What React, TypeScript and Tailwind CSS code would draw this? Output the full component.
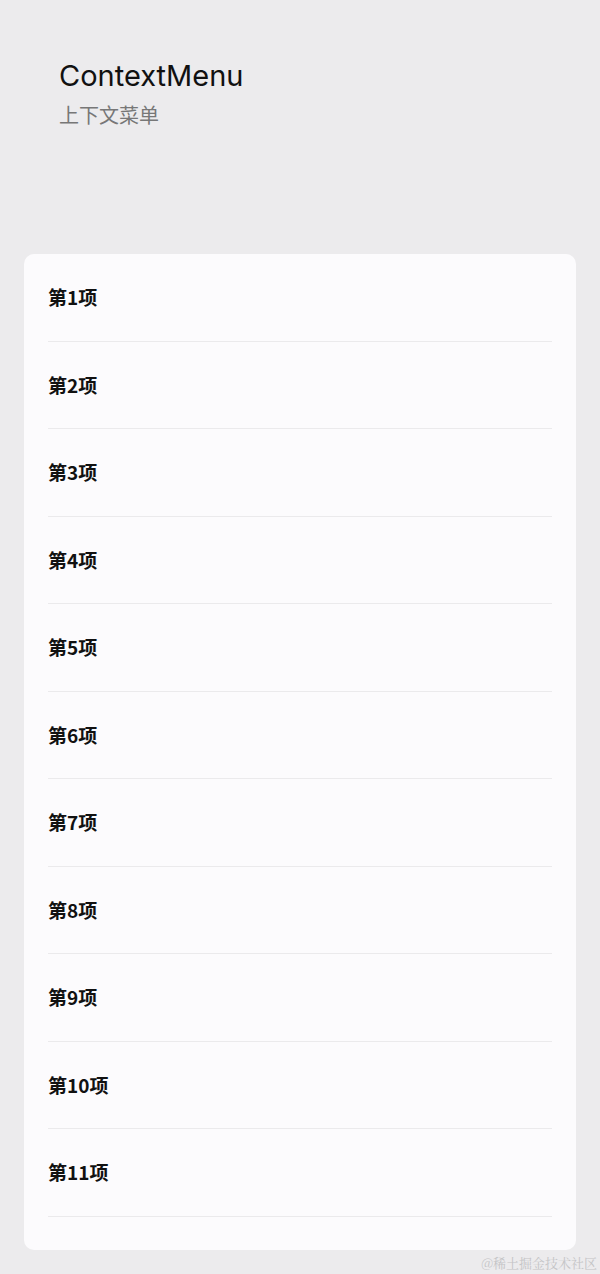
const items = Array.from({ length: 11 }, (_, i) => `第${i + 1}项`);

export default function App() {
  return (
    <div className="relative w-[600px] h-[1274px] overflow-hidden bg-[#ecebed] font-['Inter','Noto_Sans_CJK_SC',sans-serif]">
      <div className="pl-[59px] pt-[58px]">
        <h1 className="text-[29px] leading-[36px] font-normal text-[#111]">ContextMenu</h1>
        <p className="mt-[8px] text-[20px] leading-[26px] text-[#777] font-['Noto_Sans_CJK_SC',sans-serif]">
          上下文菜单
        </p>
      </div>

      <div className="mx-[24px] mt-[126px] h-[996px] overflow-hidden rounded-[10px] bg-[#fcfbfd]">
        {items.map((label) => (
          <div key={label} className="mx-[24px] h-[87.5px] flex items-center border-b border-[#ebeaec]">
            <span className="text-[19px] font-semibold text-[#111] font-['Noto_Sans_CJK_SC',sans-serif]">
              {label}
            </span>
          </div>
        ))}
      </div>

      <div className="absolute right-[3px] bottom-[2px] text-[13px] text-[#c4c4c6] font-['Noto_Serif_CJK_SC','Noto_Sans_CJK_SC',serif]">
        @稀土掘金技术社区
      </div>
    </div>
  );
}
